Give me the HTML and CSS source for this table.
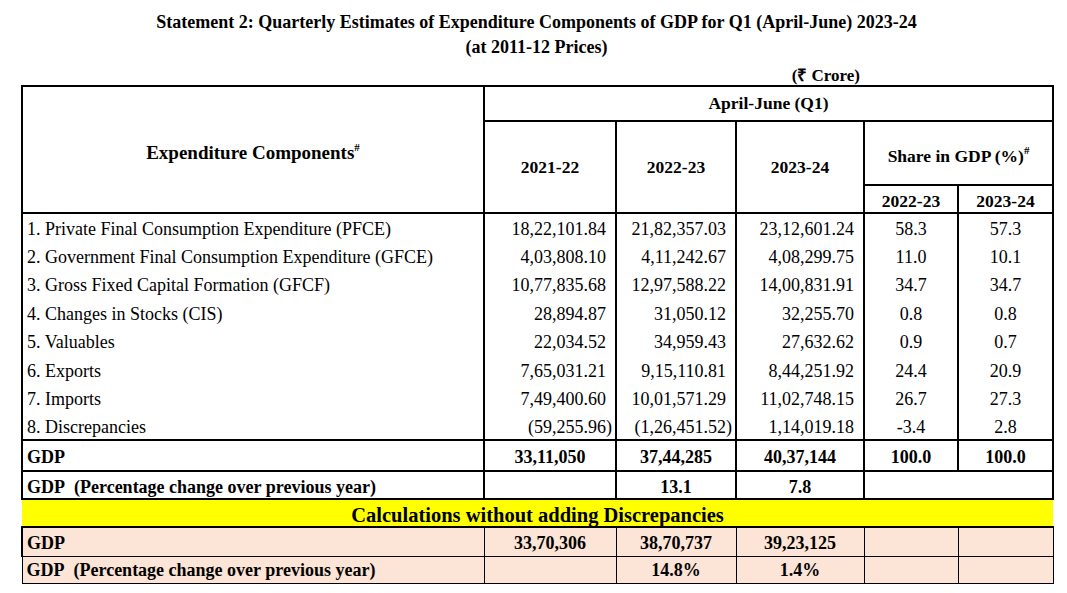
FILE: index.html
```html
<!DOCTYPE html>
<html>
<head>
<meta charset="utf-8">
<link rel="stylesheet" href="styles.css">
</head>
<body>
<div class="page">
  <h1 class="title">Statement 2: Quarterly Estimates of Expenditure Components of GDP for Q1 (April-June) 2023-24</h1>
  <h2 class="subtitle">(at 2011-12 Prices)</h2>
  <div class="unit-row"><span class="unit">(₹ Crore)</span></div>
  <table class="stats">
    <colgroup>
      <col class="c1"><col class="c2"><col class="c3"><col class="c4"><col class="c5"><col class="c6">
    </colgroup>
    <thead>
      <tr class="h1">
        <th rowspan="3" class="comp">Expenditure Components<sup>#</sup></th>
        <th colspan="5">April-June (Q1)</th>
      </tr>
      <tr class="h2">
        <th rowspan="2">2021-22</th>
        <th rowspan="2">2022-23</th>
        <th rowspan="2">2023-24</th>
        <th colspan="2" class="share">Share in GDP (%)<sup>#</sup></th>
      </tr>
      <tr class="h3">
        <th>2022-23</th>
        <th>2023-24</th>
      </tr>
    </thead>
    <tbody class="data">
      <tr><td class="lbl">1. Private Final Consumption Expenditure (PFCE)</td><td class="num">18,22,101.84</td><td class="num">21,82,357.03</td><td class="num">23,12,601.24</td><td class="pct">58.3</td><td class="pct">57.3</td></tr>
      <tr><td class="lbl">2. Government Final Consumption Expenditure (GFCE)</td><td class="num">4,03,808.10</td><td class="num">4,11,242.67</td><td class="num">4,08,299.75</td><td class="pct">11.0</td><td class="pct">10.1</td></tr>
      <tr><td class="lbl">3. Gross Fixed Capital Formation (GFCF)</td><td class="num">10,77,835.68</td><td class="num">12,97,588.22</td><td class="num">14,00,831.91</td><td class="pct">34.7</td><td class="pct">34.7</td></tr>
      <tr><td class="lbl">4. Changes in Stocks (CIS)</td><td class="num">28,894.87</td><td class="num">31,050.12</td><td class="num">32,255.70</td><td class="pct">0.8</td><td class="pct">0.8</td></tr>
      <tr><td class="lbl">5. Valuables</td><td class="num">22,034.52</td><td class="num">34,959.43</td><td class="num">27,632.62</td><td class="pct">0.9</td><td class="pct">0.7</td></tr>
      <tr><td class="lbl">6. Exports</td><td class="num">7,65,031.21</td><td class="num">9,15,110.81</td><td class="num">8,44,251.92</td><td class="pct">24.4</td><td class="pct">20.9</td></tr>
      <tr><td class="lbl">7. Imports</td><td class="num">7,49,400.60</td><td class="num">10,01,571.29</td><td class="num">11,02,748.15</td><td class="pct">26.7</td><td class="pct">27.3</td></tr>
      <tr><td class="lbl">8. Discrepancies</td><td class="num neg">(59,255.96<span class="cp">)</span></td><td class="num neg">(1,26,451.52<span class="cp">)</span></td><td class="num">1,14,019.18</td><td class="pct">-3.4</td><td class="pct">2.8</td></tr>
    </tbody>
    <tbody class="totals">
      <tr class="gdp"><td class="lbl">GDP</td><td>33,11,050</td><td>37,44,285</td><td>40,37,144</td><td>100.0</td><td>100.0</td></tr>
      <tr class="chg"><td class="lbl">GDP&nbsp; (Percentage change over previous year)</td><td></td><td>13.1</td><td>7.8</td><td colspan="2"></td></tr>
      <tr class="banner"><td colspan="6">Calculations without adding Discrepancies</td></tr>
    </tbody>
    <tbody class="peach">
      <tr class="p1"><td class="lbl">GDP</td><td>33,70,306</td><td>38,70,737</td><td>39,23,125</td><td></td><td></td></tr>
      <tr class="p2"><td class="lbl">GDP&nbsp; (Percentage change over previous year)</td><td></td><td>14.8%</td><td>1.4%</td><td></td><td></td></tr>
    </tbody>
  </table>
</div>
</body>
</html>
```

FILE: styles.css
```css
html, body {
  margin: 0;
  padding: 0;
  background: #ffffff;
}
body {
  font-family: "Liberation Serif", "Times New Roman", serif;
  color: #000;
}
.page {
  padding: 11px 15px 0 21px;
  width: 1031px;
}
.title {
  margin: 0;
  font-size: 18px;
  font-weight: bold;
  text-align: center;
  line-height: 22px;
}
.subtitle {
  margin: 3px 0 0 0;
  font-size: 18px;
  font-weight: bold;
  text-align: center;
  line-height: 22px;
}
.unit-row {
  display: flex;
  justify-content: flex-end;
  padding-right: 192px;
  height: 18px;
  margin-top: 9px;
}
.unit {
  font-size: 17px;
  font-weight: bold;
  line-height: 18px;
}
.stats {
  border-collapse: collapse;
  width: 1031px;
  table-layout: fixed;
  font-size: 18px;
}
.c1 { width: 462px; }
.c2 { width: 132px; }
.c3 { width: 120px; }
.c4 { width: 128px; }
.c5 { width: 94px; }
.c6 { width: 95px; }
.stats th {
  border: 2px solid #000;
  font-size: 17.5px;
  font-weight: bold;
  text-align: center;
  vertical-align: middle;
  padding: 0;
}
.stats sup {
  font-size: 11px;
  line-height: 0;
  vertical-align: 8px;
}
.h1 { height: 35px; }
.h2 { height: 64px; }
.h3 { height: 28px; }
.stats th.comp {
  padding-top: 6px;
  font-size: 19px;
}
.h2 th { padding-top: 0; }
.stats th.share { padding-top: 6px; }
.h3 th { padding-top: 4px; }
.stats td {
  padding: 0;
  vertical-align: middle;
  border-left: 2px solid #000;
  border-right: 2px solid #000;
  white-space: nowrap;
}
.data tr { height: 28.4px; }
.data td { padding-top: 4px; }
.lbl {
  text-align: left;
  padding-left: 4px !important;
}
.num {
  text-align: right;
  padding-right: 9px !important;
}
.num .cp {
  margin-right: -6px;
}
.pct {
  text-align: center;
}
.totals td, .peach td {
  font-weight: bold;
  text-align: center;
  border: 2px solid #000;
}
.totals td.lbl, .peach td.lbl {
  text-align: left;
}
.gdp { height: 31px; }
.gdp td { padding-top: 3px; }
.chg { height: 28px; }
.chg td { padding-top: 4px; }
.banner { height: 28px; }
.banner td {
  background: #ffff00;
  font-size: 20.5px;
  text-align: center;
  border-left: none;
  border-right: none;
  border-bottom: 2px solid #000;
  line-height: 22px;
  padding-top: 3px;
}
.peach td {
  background: #fce4d6;
  border: 1px solid #000;
}
.p1 { height: 29px; }
.p1 td { padding-top: 3px; }
.p2 { height: 27px; }
.p2 td { padding-top: 2px; }
.p1 td:first-child { border-left-width: 2px; }
```
